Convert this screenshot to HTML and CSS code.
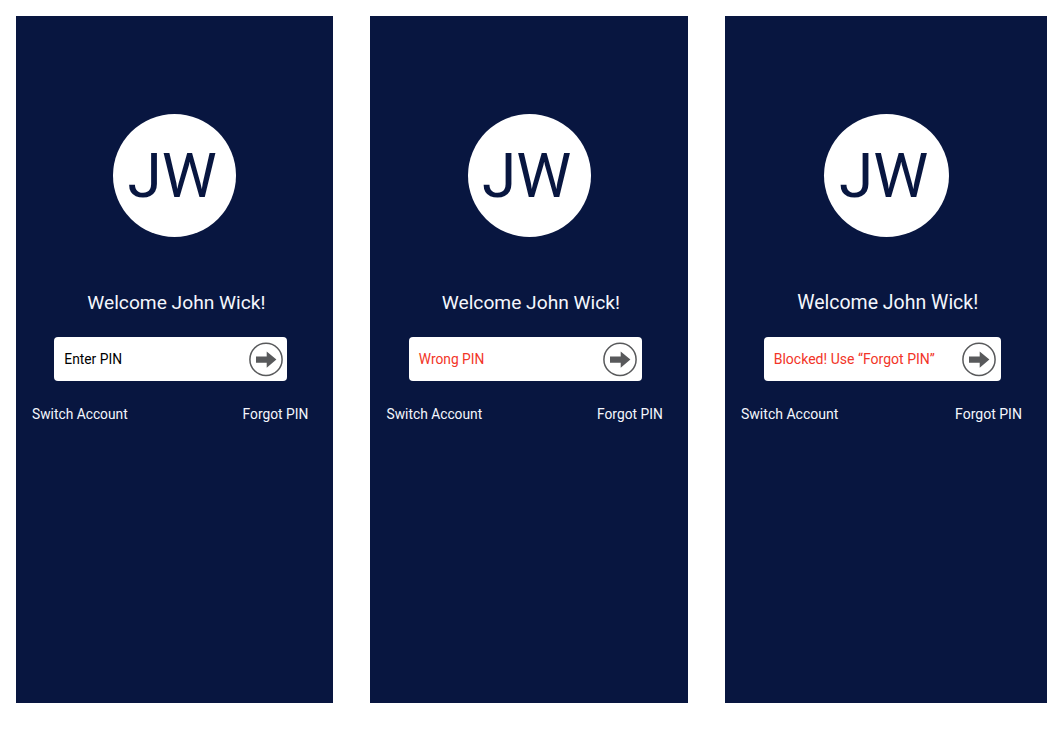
FILE: index.html
```html
<!DOCTYPE html>
<html lang="en">
<head>
<meta charset="utf-8">
<title>PIN login states</title>
<link rel="stylesheet" href="styles.css">
</head>
<body>
<main class="board">
  <section class="screen">
    <div class="avatar"><span class="initials">JW</span></div>
    <h1 class="welcome">Welcome John Wick!</h1>
    <div class="field"><span class="hint">Enter PIN</span>
      <svg class="go" viewBox="0 0 34 34"><circle cx="17" cy="17.4" r="16.1"/><path d="M7 14.4h10.7V9.4L27.4 17.5l-9.7 8.2v-4.9H7z"/></svg></div>
    <nav class="links"><a>Switch Account</a><a>Forgot PIN</a></nav>
  </section>
  <section class="screen">
    <div class="avatar"><span class="initials">JW</span></div>
    <h1 class="welcome">Welcome John Wick!</h1>
    <div class="field"><span class="hint error">Wrong PIN</span>
      <svg class="go" viewBox="0 0 34 34"><circle cx="17" cy="17.4" r="16.1"/><path d="M7 14.4h10.7V9.4L27.4 17.5l-9.7 8.2v-4.9H7z"/></svg></div>
    <nav class="links"><a>Switch Account</a><a>Forgot PIN</a></nav>
  </section>
  <section class="screen wide">
    <div class="avatar"><span class="initials">JW</span></div>
    <h1 class="welcome">Welcome John Wick!</h1>
    <div class="field"><span class="hint error">Blocked! Use “Forgot PIN”</span>
      <svg class="go" viewBox="0 0 34 34"><circle cx="17" cy="17.4" r="16.1"/><path d="M7 14.4h10.7V9.4L27.4 17.5l-9.7 8.2v-4.9H7z"/></svg></div>
    <nav class="links"><a>Switch Account</a><a>Forgot PIN</a></nav>
  </section>
</main>
</body>
</html>
```
FILE: styles.css
```css
* { box-sizing: border-box; }
body { margin: 0; background: #fff; font-family: Roboto, "Liberation Sans", sans-serif; }
.board { display: flex; gap: 37.2px; padding: 16px; height: 731px; overflow: hidden; }
.screen { flex: none; width: 317.3px; height: 687px; background: #081640; color: #f4f6fd; }
.avatar { width: 123px; height: 123px; margin: 98px 0 0 97.2px; padding-right: 5px; border-radius: 50%; background: #fff; color: #081640; display: flex; justify-content: center; }
.initials { font-size: 62px; line-height: 123px; }
.welcome { margin: 54px 0 0 71.3px; font-size: 19.2px; line-height: 24px; font-weight: 400; white-space: nowrap; }
.field { width: 233px; height: 44px; margin: 22px 0 0 38.3px; padding: 0 4.5px 0 10px; border-radius: 4px; background: #fff; display: flex; align-items: center; justify-content: space-between; }
.hint { color: #000; font-size: 13.8px; white-space: nowrap; }
.error { color: #f23528; }
.go { width: 34px; height: 34px; overflow: visible; fill: #58595b; }
.go circle { fill: none; stroke: #58595b; stroke-width: 1.5; }
.links { display: flex; justify-content: space-between; margin-top: 23px; padding: 0 25px 0 16px; font-size: 13.8px; line-height: 20px; }
.wide { width: 322px; }
.wide .avatar { width: 125px; margin-left: 98.6px; }
.wide .welcome { font-size: 19.5px; margin-left: 72.2px; line-height: 24.6px; height: 24px; }
.wide .field { width: 237px; margin-left: 38.7px; }
.wide .hint, .wide .links { font-size: 14.05px; }
```
